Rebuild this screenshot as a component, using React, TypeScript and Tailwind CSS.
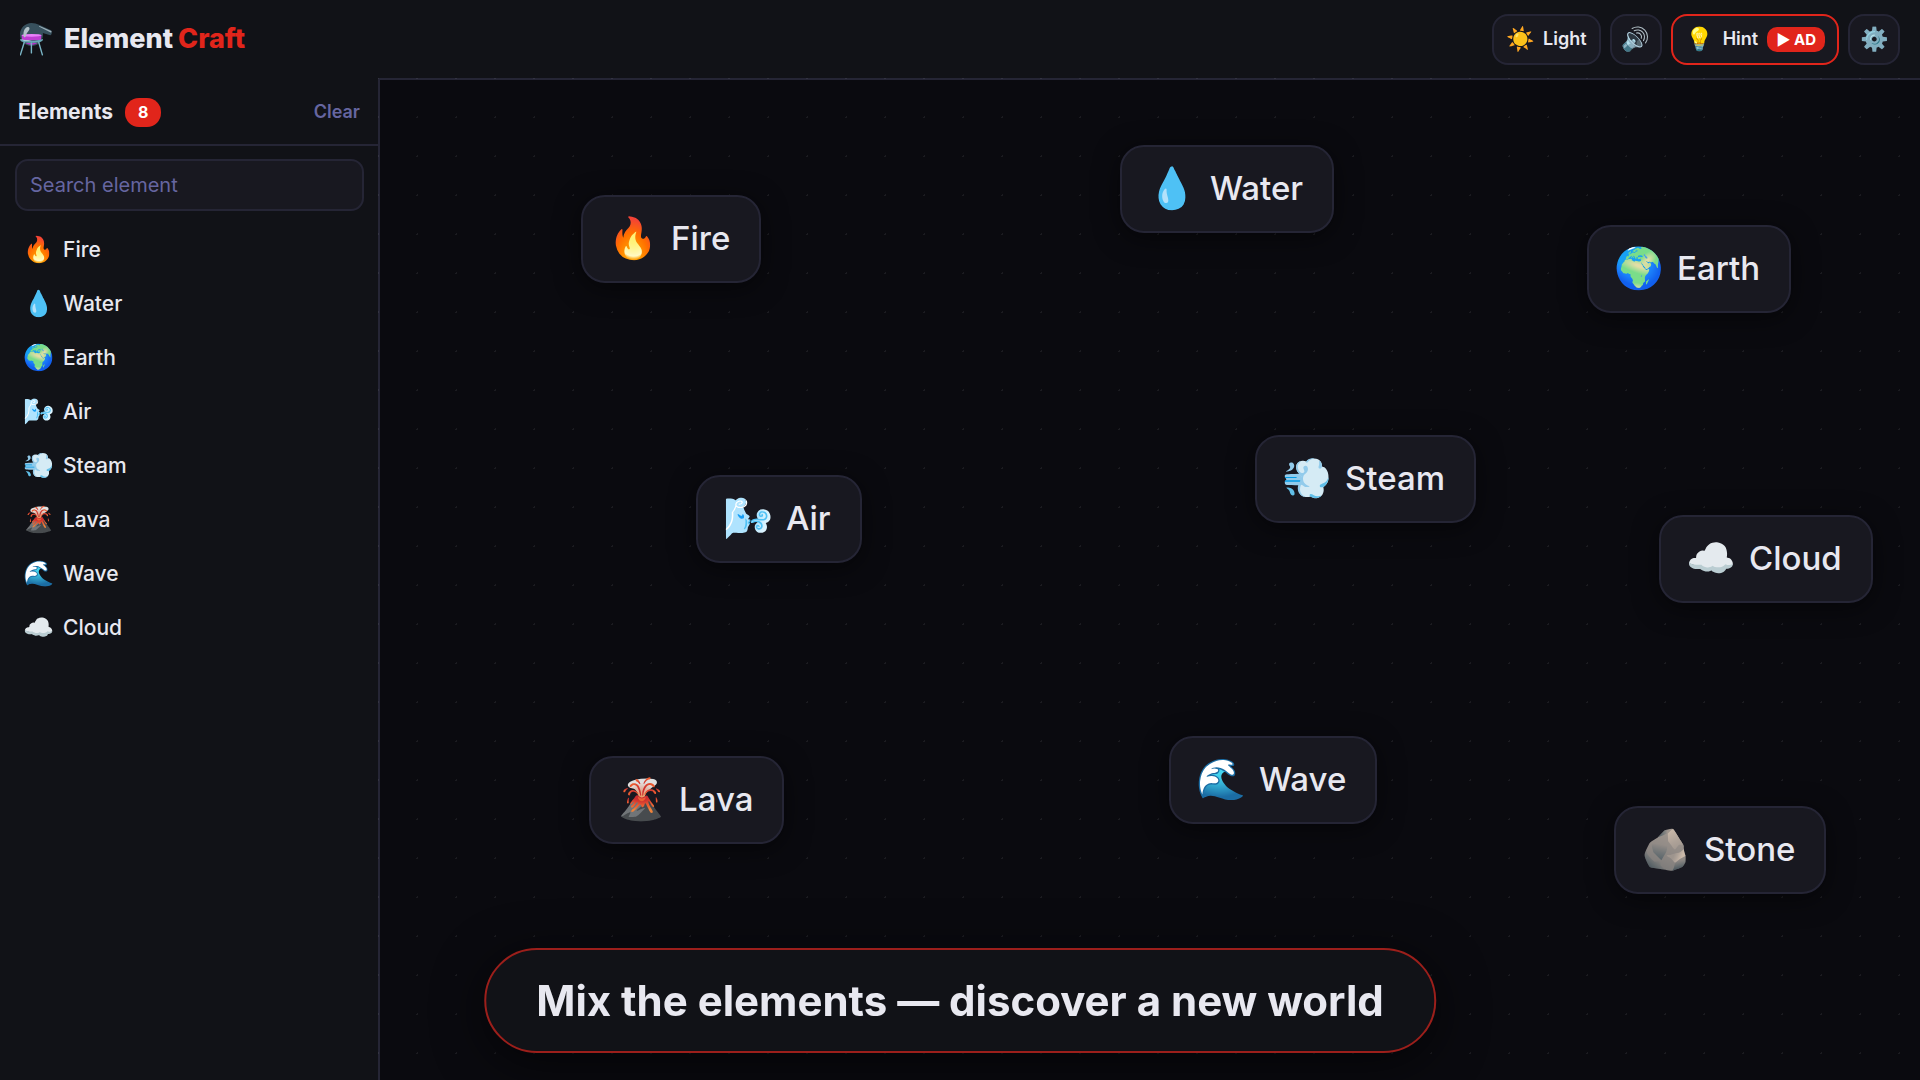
import { useState } from 'react';

const elements = [
  { emoji: '🔥', name: 'Fire' },
  { emoji: '💧', name: 'Water' },
  { emoji: '🌍', name: 'Earth' },
  { emoji: '🌬️', name: 'Air' },
  { emoji: '💨', name: 'Steam' },
  { emoji: '🌋', name: 'Lava' },
  { emoji: '🌊', name: 'Wave' },
  { emoji: '☁️', name: 'Cloud' },
];

// Positions on the crafting canvas, relative to its top left corner
const placed = [
  { emoji: '🔥', name: 'Fire', x: 201, y: 115 },
  { emoji: '💧', name: 'Water', x: 740, y: 65 },
  { emoji: '🌍', name: 'Earth', x: 1207, y: 145 },
  { emoji: '🌬️', name: 'Air', x: 316, y: 395 },
  { emoji: '💨', name: 'Steam', x: 875, y: 355 },
  { emoji: '☁️', name: 'Cloud', x: 1279, y: 435 },
  { emoji: '🌋', name: 'Lava', x: 209, y: 676 },
  { emoji: '🌊', name: 'Wave', x: 789, y: 656 },
  { emoji: '🪨', name: 'Stone', x: 1234, y: 726 },
];

const toolButton =
  'flex h-[51px] items-center justify-center rounded-2xl border-2 bg-[#181820] text-lg font-semibold';

const FlaskLogo = () => (
  <svg viewBox="0 0 160 164" className="h-[33px] w-8" aria-hidden="true">
    {/* Glass bulb and spout */}
    <path
      d="M57 0C26 0 0 25 0 57c0 33 26 57 57 57s58-24 58-55c0-4 0-7-1-10l37 12c6-2 9-10 8-17-1-5-1-6-4-8L98 10C84 4 72 0 57 0Z"
      fill="#37505d"
    />
    {/* Liquid */}
    <path d="M8 60h99l-3 26H11Z" fill="#bd3fd2" />
    <ellipse cx="58" cy="61" rx="50" ry="7" fill="#ea80fc" />
    <path d="M27 99h60c-16 12-43 12-60 0Z" fill="#b235c8" />
    {/* Highlights */}
    <path d="M38 20c-13 2-23 21-20 44 1 8 8 9 11 2 4-17 8-18 16-30 6-9 1-18-7-16Z" fill="#b3c2c9" />
    <path d="M98 14l58 26c4 5 0 9-5 6L99 20c-5-3-5-6-1-6Z" fill="#9fb1ba" />
    {/* Stand */}
    <path d="M1 79c30 12 83 12 113 0 3 6-2 12-10 14-28 7-65 7-91 0-9-2-14-8-12-14Z" fill="#6aa7b5" />
    <path d="M3 80c18 6 36 8 55 7-10 5-46 2-55-7Z" fill="#d2eff5" />
    <path d="M21 97 2 159M94 97l18 62M57 101v48" fill="none" stroke="#7ab5c6" strokeWidth="7" strokeLinecap="round" />
  </svg>
);

const Header = () => (
  <header className="flex h-[78px] shrink-0 items-center justify-between bg-[#111217] px-5">
    <div className="flex items-center gap-3">
      <FlaskLogo />
      <h1 className="flex gap-[5px] text-[27px] font-extrabold">
        Element <span className="text-[#e1251b]">Craft</span>
      </h1>
    </div>
    <div className="flex items-center gap-[9px]">
      <button className={`${toolButton} gap-2 border-[#252535] px-3`}>
        <span className="text-[23px] leading-none">☀️</span>
        Light
      </button>
      <button aria-label="Sound" className={`${toolButton} w-[52px] border-[#252535]`}>
        <span className="text-[23px] leading-none">🔊</span>
      </button>
      <button className={`${toolButton} gap-[9px] border-[#e1251b] px-3`}>
        <span className="text-[23px] leading-none">💡</span>
        Hint
        <span className="rounded-[10px] bg-[#e1251b] px-[9px] text-[15px] leading-[25px] font-bold text-white">▶ AD</span>
      </button>
      <button aria-label="Settings" className={`${toolButton} w-[52px] border-[#252535]`}>
        <span className="text-[23px] leading-none">⚙️</span>
      </button>
    </div>
  </header>
);

const Sidebar = () => {
  const [query, setQuery] = useState('');
  const visible = elements.filter((el) => el.name.toLowerCase().includes(query.toLowerCase()));

  return (
    <aside className="w-[378px] shrink-0 bg-[#111217]">
      <div className="flex h-[68px] items-center justify-between border-b-2 border-[#252535] px-[18px] pt-0.5">
        <div className="flex items-center gap-3">
          <h2 className="text-[21px] font-bold">Elements</h2>
          <span className="rounded-[14px] bg-[#e1251b] px-[13px] text-base leading-[29px] font-bold text-white">
            {elements.length}
          </span>
        </div>
        <button className="text-lg font-semibold text-[#6666a0]">Clear</button>
      </div>
      <div className="pt-[13px] pr-[14px] pb-3 pl-[15px]">
        <input
          type="text"
          aria-label="Search element"
          placeholder="Search element"
          value={query}
          onChange={(e) => setQuery(e.target.value)}
          className="h-[52px] w-full rounded-[13px] border-2 border-[#252535] bg-[#181820] px-[13px] text-xl outline-none placeholder:text-[#6666a0]"
        />
      </div>
      <ul>
        {visible.map((el) => (
          <li key={el.name} className="flex h-[54px] items-center gap-[9px] px-[23px]">
            <span className="pb-0.5 text-[25px] leading-none">{el.emoji}</span>
            <span className="text-[21px] font-medium">{el.name}</span>
          </li>
        ))}
      </ul>
    </aside>
  );
};

const Board = () => (
  <main className="relative flex-1 border-t-2 border-l-2 border-[#252535]">
    {/* Dot grid, drawn over the border as well */}
    <div className="absolute -top-0.5 right-0 bottom-0 -left-0.5 bg-[radial-gradient(circle,rgba(255,255,255,0.07)_1px,transparent_1px)] bg-[size:39px_39px] bg-[position:20px_20px]" />
    {placed.map((el) => (
      <div
        key={el.name}
        style={{ left: el.x, top: el.y }}
        className="absolute flex h-[88px] cursor-grab items-center gap-[13px] rounded-3xl border-2 border-[#252535] bg-[#181820] pr-[29px] pl-[25px] shadow-[0_5px_26px_rgba(0,0,0,0.5)]"
      >
        <span className="pb-[3px] text-[40px] leading-none">{el.emoji}</span>
        <span className="text-[33px] font-medium">{el.name}</span>
      </div>
    ))}
  </main>
);

export default function App() {
  return (
    <div className="flex min-h-screen flex-col bg-[#0a0a0f] font-['Inter',sans-serif] text-[#e8e8f0]">
      <Header />
      <div className="flex flex-1">
        <Sidebar />
        <Board />
      </div>
      <div className="fixed bottom-[27px] left-1/2 -translate-x-1/2 rounded-full border-2 border-[#9c1f1b] bg-[#111217] px-[50px] text-[42px] leading-[101px] font-bold whitespace-nowrap shadow-[0_10px_50px_rgba(0,0,0,0.6)]">
        Mix the elements — discover a new world
      </div>
    </div>
  );
}
